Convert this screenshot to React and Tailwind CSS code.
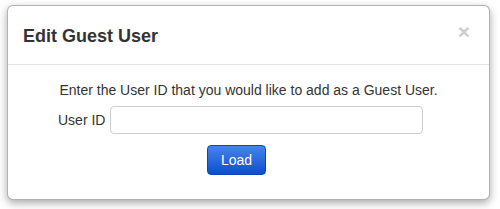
export default function App() {
  return (
    <div className="w-[500px] h-[209px] bg-white pt-[5px] pl-[7px] font-['Liberation_Sans',Arial,sans-serif] text-[#333] text-[14px]">
      <div className="w-[483px] h-[195px] bg-white border border-[rgba(0,0,0,0.3)] rounded-[6px] shadow-[0_3px_9px_rgba(0,0,0,0.35)]">
        <div className="h-[59px] pl-[15px] pr-[19px] flex items-center justify-between border-b border-[#e5e5e5]">
          <h4 className="text-[18px] font-bold leading-[26px] pt-[1px]">Edit Guest User</h4>
          <button className="text-[21px] font-bold leading-none text-black opacity-20 -mt-[8px]">×</button>
        </div>
        <div className="pt-[15px]">
          <p className="text-center leading-[20px]">Enter the User ID that you would like to add as a Guest User.</p>
          <div className="mt-[6px] pl-[50px] flex items-center">
            <label className="mr-[5px] leading-[20px]">User ID</label>
            <input className="w-[313px] h-[28px] border border-[#ccc] rounded-[4px] px-2 outline-none" />
          </div>
          <button className="mt-[11px] ml-[199px] w-[59px] h-[30px] rounded-[4px] border border-[#0a46b8] bg-gradient-to-b from-[#4584ea] to-[#0a4dcf] text-white text-[14px] leading-none">
            Load
          </button>
        </div>
      </div>
    </div>
  );
}
